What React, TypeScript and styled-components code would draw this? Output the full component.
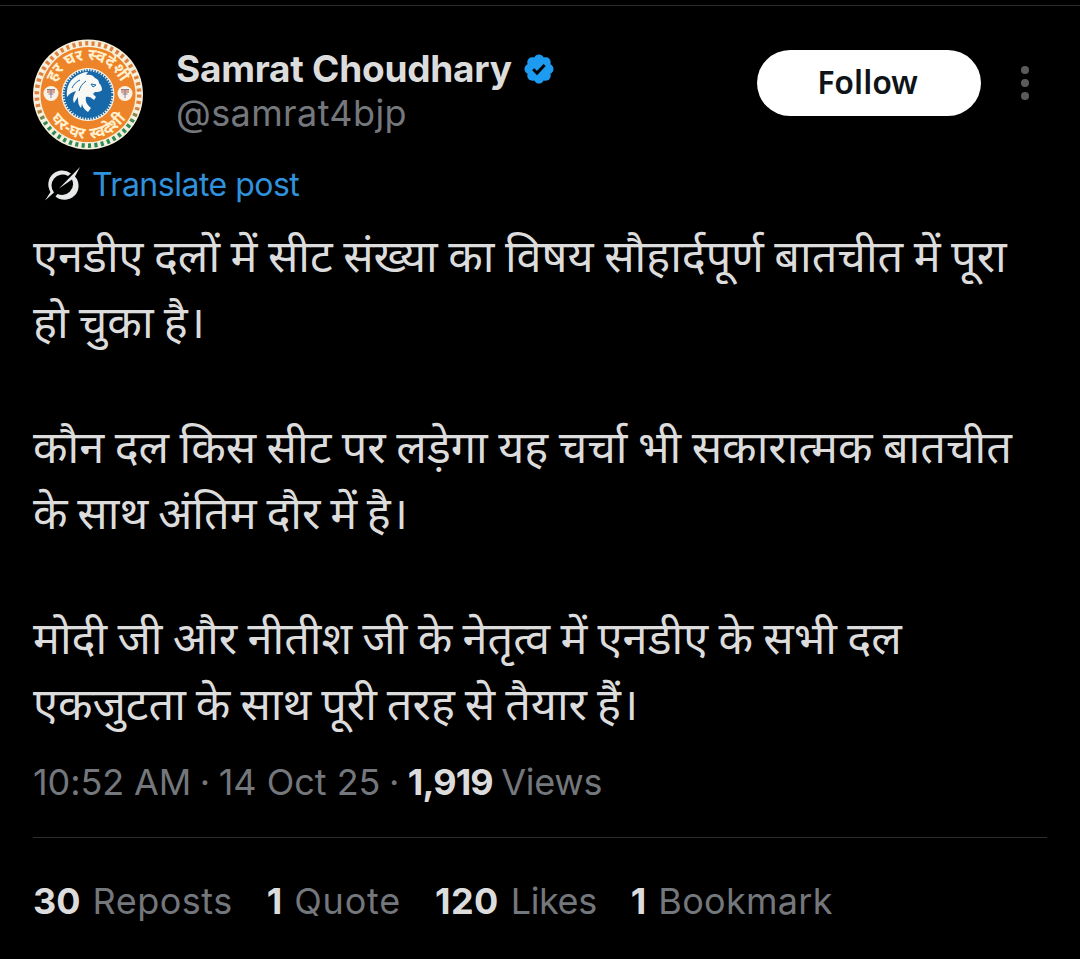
import React, {FC} from 'react';
import styled, {createGlobalStyle} from "styled-components";

interface TextProps {
    $spacing?: number
}

interface StatProps {
    count: string,
    label: string,
    countSpacing?: number,
    labelSpacing?: number
}

const GlobalStyle = createGlobalStyle`
  * {
    box-sizing: border-box;
  }

  body {
    margin: 0;
    background: #000;
    font-family: Inter, "Noto Sans", "Noto Sans Devanagari", sans-serif;
    color: #dcdcdc;
  }
`

const Page = styled.main`
  height: 959px;
  padding-top: 5px;
  overflow: hidden;
  background: #000;
`

const Post = styled.article`
  height: 954px;
  padding: 33px 33px 0;
  border-top: 1px solid #2c2d2f;
`

const Header = styled.header`
  display: flex;
  align-items: flex-start;
  height: 111px;
`

const Author = styled.div`
  flex: 1;
  padding: 8px 0 0 33px;
  white-space: nowrap;
`

const NameRow = styled.div`
  display: flex;
  align-items: center;
  gap: 10px;
  height: 44px;
`

const Name = styled.span<TextProps>`
  font-size: 37px;
  font-weight: 700;
  line-height: 44px;
  letter-spacing: ${({$spacing = 0}) => $spacing}px;
`

const Handle = styled.div<TextProps>`
  font-size: 36px;
  line-height: 44px;
  color: #74777c;
  letter-spacing: ${({$spacing = 0}) => $spacing}px;
`

const FollowButton = styled.button`
  width: 224px;
  height: 66px;
  margin-top: 11px;
  padding: 0 3px 2px 0;
  border: 0;
  border-radius: 33px;
  background: #fff;
  color: #0f1419;
  font: 600 32px/64px "Noto Sans", sans-serif;
`

const MoreButton = styled.button`
  display: flex;
  flex-direction: column;
  align-items: center;
  gap: 5px;
  width: 12px;
  margin: 27px 16px 0 38px;
  padding: 0;
  border: 0;
  background: none;
`

const Dot = styled.i`
  width: 8px;
  height: 8px;
  border-radius: 50%;
  background: #5b5b5b;
`

const Translate = styled.div<TextProps>`
  display: flex;
  align-items: center;
  gap: 11px;
  height: 46px;
  margin-top: 11px;
  padding-left: 11px;
  color: #3091dc;
  font-size: 32px;
  white-space: nowrap;
  letter-spacing: ${({$spacing = 0}) => $spacing}px;
`

const Body = styled.div`
  display: flex;
  flex-direction: column;
  gap: 60px;
  margin-top: 22px;
`

const Paragraph = styled.p`
  margin: 0;
`

const Line = styled.span<TextProps>`
  display: block;
  height: 65.5px;
  font-family: "Noto Sans Devanagari", "Noto Sans", sans-serif;
  font-size: 45px;
  line-height: 65.5px;
  white-space: nowrap;
  word-spacing: ${({$spacing = 0}) => $spacing}px;
`

const Meta = styled.div`
  display: flex;
  align-items: center;
  gap: 8.5px;
  height: 60px;
  margin-top: 10px;
  color: #74777c;
  font-size: 36px;
  white-space: nowrap;
`

const MetaText = styled.span<TextProps>`
  letter-spacing: ${({$spacing = 0}) => $spacing}px;
`

const Strong = styled.b<TextProps>`
  color: #dcdcdc;
  font-weight: 700;
  letter-spacing: ${({$spacing = 0}) => $spacing}px;
`

const Stats = styled.footer`
  display: flex;
  align-items: center;
  gap: 34px;
  height: 126px;
  margin-top: 25px;
  border-top: 1px solid #2c2d2f;
`

const StatItem = styled.div`
  display: flex;
  gap: 12px;
  color: #74777c;
  font-size: 36px;
  white-space: nowrap;
`

const paragraphs = [
    [
        {text: 'एनडीए दलों में सीट संख्या का विषय सौहार्दपूर्ण बातचीत में पूरा', spacing: -1.2},
        {text: 'हो चुका है।', spacing: -1.5},
    ],
    [
        {text: 'कौन दल किस सीट पर लड़ेगा यह चर्चा भी सकारात्मक बातचीत', spacing: -1.25},
        {text: 'के साथ अंतिम दौर में है।', spacing: -1.9},
    ],
    [
        {text: 'मोदी जी और नीतीश जी के नेतृत्व में एनडीए के सभी दल', spacing: -1.4},
        {text: 'एकजुटता के साथ पूरी तरह से तैयार हैं।', spacing: -1.7},
    ],
]

const Avatar: FC = () => (
    <svg width="110" height="111" viewBox="0 0 110 111">
        <defs>
            <path id="arc-top" d="M20.500 55.500a34.500 34.500 0 0 1 69 0"/>
            <path id="arc-bottom" d="M10.500 55.500a44.500 44.500 0 0 0 89 0"/>
            <linearGradient id="ticks" gradientUnits="userSpaceOnUse" x1="0" y1="0" x2="0" y2="111">
                <stop offset=".62" stopColor="#e0813f"/>
                <stop offset=".76" stopColor="#2d8b57"/>
            </linearGradient>
        </defs>
        <circle cx="55" cy="55.500" r="55" fill="#f5f0dc"/>
        <circle cx="55" cy="55.500" r="51.200" fill="none" stroke="url(#ticks)" strokeWidth="4.500" strokeDasharray="3.100 3.333"/>
        <circle cx="55" cy="55.500" r="47.500" fill="#ee8429"/>
        <circle cx="55" cy="55.500" r="26.500" fill="#f7f3e8"/>
        <circle cx="55" cy="55.500" r="23.500" fill="#1768a8"/>
        <circle cx="55" cy="55.500" r="24" fill="none" stroke="#1768a8" strokeWidth="2.500" strokeDasharray="1.500 1.200"/>
        <path
            d="M34 58c-1-9 2-16 8-20 4-3 8-5 13-5l-2 3c4-1 7 0 9 3 3 1 4 3 4 5 2 2 3 4 3 7-2 2-4 2-7 2l-2 2 3 3-2 3c-3-3-6-4-8-3-1 4 1 8 5 11l-3 4c-3-2-5-4-6-8l-1 4c-3-3-3-7-3-11l-4 6c-2-4 0-8 2-12-4 1-7 3-9 6z"
            fill="#f8f8f4"
        />
        <path
            d="M58 45l5 1-3 2zM47 41c-4 2-6 4-8 8M53 42c-4 3-6 6-7 10"
            fill="none"
            stroke="#1768a8"
            strokeWidth="1"
        />
        {[18, 92].map(x => (
            <g key={x}>
                <circle cx={x} cy="54.500" r="7.500" fill="#f8f1e5"/>
                <path d={`M${x - 4} 50h8v4h-8z`} fill="#dba88f"/>
                <path d={`M${x - 4} 50.500h8M${x - 2.500} 55h5M${x} 51v8`} stroke="#8a7d96" strokeWidth="1"/>
            </g>
        ))}
        <g
            fill="#fff1cf"
            fontFamily="'Noto Sans Devanagari', 'Noto Sans', sans-serif"
            fontSize="16"
            fontWeight="700"
            textAnchor="middle"
        >
            <text><textPath href="#arc-top" startOffset="50%">हर घर स्वदेशी</textPath></text>
            <text wordSpacing="2"><textPath href="#arc-bottom" startOffset="50%">घर-घर स्वदेशी</textPath></text>
        </g>
    </svg>
)

const VerifiedIcon: FC = () => (
    <svg width="34" height="34" viewBox="0 0 24 24">
        <path
            fill="#1d9bf0"
            d="M22.250 12c0-1.430-.88-2.670-2.190-3.340.46-1.390.2-2.900-.81-3.910s-2.520-1.270-3.910-.81c-.66-1.310-1.910-2.190-3.340-2.190s-2.670.88-3.330 2.190c-1.400-.46-2.910-.2-3.920.81s-1.260 2.520-.8 3.910c-1.310.67-2.200 1.910-2.200 3.340s.89 2.670 2.200 3.340c-.46 1.390-.21 2.900.8 3.910s2.520 1.260 3.910.81c.67 1.310 1.910 2.190 3.340 2.190s2.680-.88 3.340-2.190c1.390.45 2.900.2 3.910-.81s1.270-2.520.81-3.910c1.310-.67 2.190-1.910 2.190-3.340z"
        />
        <path d="M7.900 12.200l2.700 2.700 5.400-5.700" fill="none" stroke="#000" strokeWidth="2.100"/>
    </svg>
)

const GrokIcon: FC = () => (
    <svg width="37" height="36" viewBox="0 0 37 36" fill="#e7e9ea">
        <path d="M27 7.500A14 14 0 0 0 6.500 26L1 34.500 10 26.500A11 11 0 0 1 24 10z"/>
        <path d="M15 22.500L36 1 31 10.500A14 14 0 0 1 11.500 30.500L13.500 28A11 11 0 0 0 28 13.500z"/>
    </svg>
)

const Stat: FC<StatProps> = ({count, label, countSpacing, labelSpacing}) => (
    <StatItem>
        <Strong $spacing={countSpacing}>{count}</Strong>
        <MetaText $spacing={labelSpacing}>{label}</MetaText>
    </StatItem>
)

const App: FC = () => {
    return (
        <Page>
            <GlobalStyle/>
            <Post>
                <Header>
                    <Avatar/>
                    <Author>
                        <NameRow>
                            <Name $spacing={-0.25}>Samrat Choudhary</Name>
                            <VerifiedIcon/>
                        </NameRow>
                        <Handle $spacing={0.4}>@samrat4bjp</Handle>
                    </Author>
                    <FollowButton>Follow</FollowButton>
                    <MoreButton aria-label="More">
                        <Dot/>
                        <Dot/>
                        <Dot/>
                    </MoreButton>
                </Header>

                <Translate $spacing={-0.5}>
                    <GrokIcon/>
                    <span>Translate post</span>
                </Translate>

                <Body>
                    {paragraphs.map((lines, i) => (
                        <Paragraph key={i}>
                            {lines.map(({text, spacing}) => <Line key={text} $spacing={spacing}>{text}</Line>)}
                        </Paragraph>
                    ))}
                </Body>

                <Meta>
                    <MetaText $spacing={-0.1}>10:52 AM</MetaText>
                    <MetaText>·</MetaText>
                    <MetaText>14 Oct 25</MetaText>
                    <MetaText>·</MetaText>
                    <Strong $spacing={-0.9}>1,919</Strong>
                    <MetaText $spacing={-0.3}>Views</MetaText>
                </Meta>

                <Stats>
                    <Stat count="30" label="Reposts" labelSpacing={0.5}/>
                    <Stat count="1" label="Quote" labelSpacing={0.8}/>
                    <Stat count="120" label="Likes" countSpacing={0.4} labelSpacing={-0.4}/>
                    <Stat count="1" label="Bookmark" labelSpacing={0.3}/>
                </Stats>
            </Post>
        </Page>
    );
};

export default App;
